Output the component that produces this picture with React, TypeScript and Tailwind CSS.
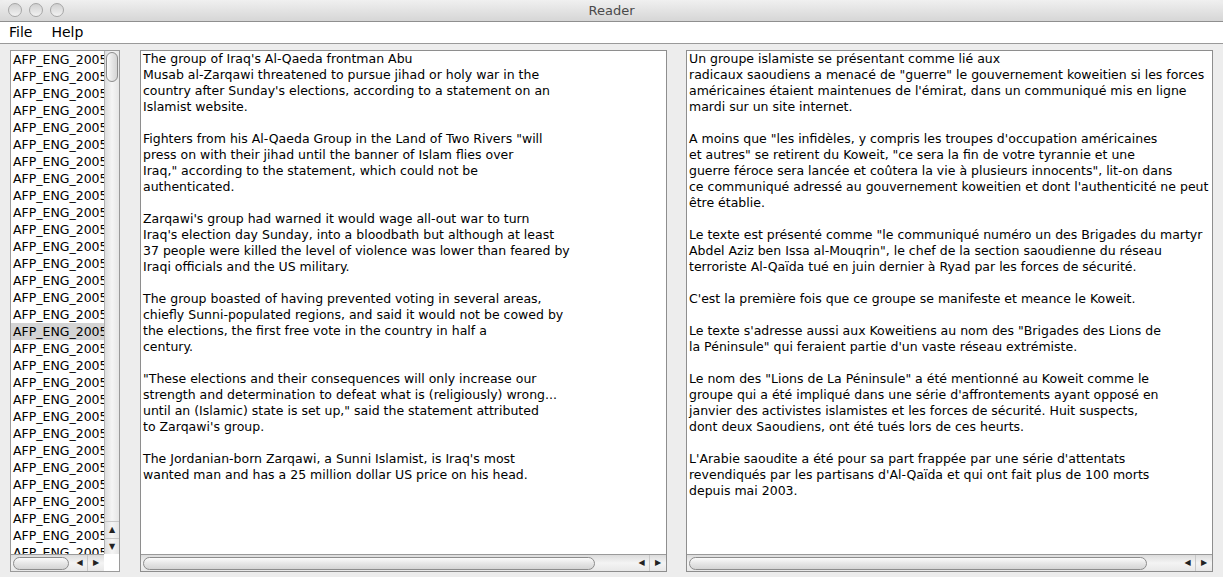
import React from "react";

const FONT = { fontFamily: '"Lucida Grande", "DejaVu Sans", sans-serif' };

const english = [
  "The group of Iraq's Al-Qaeda frontman Abu",
  "Musab al-Zarqawi threatened to pursue jihad or holy war in the",
  "country after Sunday's elections, according to a statement on an",
  "Islamist website.",
  "",
  'Fighters from his Al-Qaeda Group in the Land of Two Rivers "will',
  "press on with their jihad until the banner of Islam flies over",
  'Iraq," according to the statement, which could not be',
  "authenticated.",
  "",
  "Zarqawi's group had warned it would wage all-out war to turn",
  "Iraq's election day Sunday, into a bloodbath but although at least",
  "37 people were killed the level of violence was lower than feared by",
  "Iraqi officials and the US military.",
  "",
  "The group boasted of having prevented voting in several areas,",
  "chiefly Sunni-populated regions, and said it would not be cowed by",
  "the elections, the first free vote in the country in half a",
  "century.",
  "",
  '"These elections and their consequences will only increase our',
  "strength and determination to defeat what is (religiously) wrong...",
  'until an (Islamic) state is set up," said the statement attributed',
  "to Zarqawi's group.",
  "",
  "The Jordanian-born Zarqawi, a Sunni Islamist, is Iraq's most",
  "wanted man and has a 25 million dollar US price on his head.",
];

const french = [
  "Un groupe islamiste se présentant comme lié aux",
  'radicaux saoudiens a menacé de "guerre" le gouvernement koweitien si les forces',
  "américaines étaient maintenues de l'émirat, dans un communiqué mis en ligne",
  "mardi sur un site internet.",
  "",
  'A moins que "les infidèles, y compris les troupes d\'occupation américaines',
  'et autres" se retirent du Koweit, "ce sera la fin de votre tyrannie et une',
  'guerre féroce sera lancée et coûtera la vie à plusieurs innocents", lit-on dans',
  "ce communiqué adressé au gouvernement koweitien et dont l'authenticité ne peut",
  "être établie.",
  "",
  'Le texte est présenté comme "le communiqué numéro un des Brigades du martyr',
  'Abdel Aziz ben Issa al-Mouqrin", le chef de la section saoudienne du réseau',
  "terroriste Al-Qaïda tué en juin dernier à Ryad par les forces de sécurité.",
  "",
  "C'est la première fois que ce groupe se manifeste et meance le Koweit.",
  "",
  'Le texte s\'adresse aussi aux Koweitiens au nom des "Brigades des Lions de',
  'la Péninsule" qui feraient partie d\'un vaste réseau extrémiste.',
  "",
  'Le nom des "Lions de La Péninsule" a été mentionné au Koweit comme le',
  "groupe qui a été impliqué dans une série d'affrontements ayant opposé en",
  "janvier des activistes islamistes et les forces de sécurité. Huit suspects,",
  "dont deux Saoudiens, ont été tués lors de ces heurts.",
  "",
  "L'Arabie saoudite a été pour sa part frappée par une série d'attentats",
  "revendiqués par les partisans d'Al-Qaïda et qui ont fait plus de 100 morts",
  "depuis mai 2003.",
];

function Arrows() {
  return (
    <div className="flex h-full shrink-0">
      <div className="flex w-[16px] items-center justify-center border-r border-[#c8c8c8] text-[8px] leading-none text-[#222]">
        ◀
      </div>
      <div className="flex w-[16px] items-center justify-center text-[8px] leading-none text-[#222]">
        ▶
      </div>
    </div>
  );
}

function HScroll({ thumb }: { thumb: number }) {
  return (
    <div className="flex h-[17px] shrink-0 border-t border-[#9a9a9a] bg-gradient-to-b from-[#dcdcdc] via-[#f4f4f4] to-[#e8e8e8]">
      <div className="flex min-w-0 flex-1 items-center px-[2px]">
        <div
          className="h-[13px] rounded-full border border-[#8c8c8c] bg-gradient-to-b from-[#fbfbfb] via-[#e6e6e6] to-[#d4d4d4]"
          style={{ width: thumb }}
        />
      </div>
      <Arrows />
    </div>
  );
}

function TextPane({ lines, thumb }: { lines: string[]; thumb: number }) {
  return (
    <div className="flex h-full w-[527px] flex-col border border-[#8e8e8e] bg-white">
      <div className="flex-1 overflow-hidden px-[2px] text-[12.5px] leading-[16px] text-black">
        {lines.map((l, i) => (
          <div key={i} className="h-[16px] whitespace-pre">
            {l}
          </div>
        ))}
      </div>
      <HScroll thumb={thumb} />
    </div>
  );
}

function ListPane() {
  const rows = Array.from({ length: 30 }, (_, i) => i);
  return (
    <div className="flex h-full w-[110px] flex-col border border-[#9a9a9a] bg-white">
      <div className="flex min-h-0 flex-1">
        <div className="min-w-0 flex-1 overflow-hidden">
          {rows.map((i) => (
            <div
              key={i}
              className={
                "h-[17px] whitespace-pre pl-[2px] text-[12.5px] leading-[17px] text-black " +
                (i === 16 ? "bg-[#d4d4d4]" : "")
              }
            >
              AFP_ENG_2005
            </div>
          ))}
        </div>
        <div className="flex w-[15px] shrink-0 flex-col border-l border-[#b0b0b0] bg-gradient-to-r from-[#dedede] via-[#f5f5f5] to-[#e6e6e6]">
          <div className="flex-1 px-[1px] pt-[1px]">
            <div className="h-[30px] rounded-full border border-[#8c8c8c] bg-gradient-to-r from-[#fbfbfb] via-[#e6e6e6] to-[#d4d4d4]" />
          </div>
          <div className="flex h-[17px] items-center justify-center border-t border-[#c8c8c8] text-[8px] leading-none text-[#222]">
            ▲
          </div>
          <div className="flex h-[16px] items-center justify-center border-t border-[#c8c8c8] text-[8px] leading-none text-[#222]">
            ▼
          </div>
        </div>
      </div>
      <div className="flex h-[17px] shrink-0">
        <div className="flex min-w-0 flex-1 border-t border-[#9a9a9a] bg-gradient-to-b from-[#dcdcdc] via-[#f4f4f4] to-[#e8e8e8]">
          <div className="flex flex-1 items-center px-[2px]">
            <div className="h-[13px] w-[56px] rounded-full border border-[#8c8c8c] bg-gradient-to-b from-[#fbfbfb] via-[#e6e6e6] to-[#d4d4d4]" />
          </div>
          <Arrows />
        </div>
        <div className="w-[15px] bg-white" />
      </div>
    </div>
  );
}

export default function App() {
  return (
    <div
      className="flex h-[577px] w-[1223px] flex-col overflow-hidden bg-[#ededed]"
      style={FONT}
    >
      <div className="relative flex h-[22px] shrink-0 items-center justify-center rounded-t-[5px] border-b border-[#8f8f8f] bg-gradient-to-b from-[#f0f0f0] to-[#d6d6d6]">
        <div className="absolute left-[8px] top-[3px] flex gap-[7px]">
          {[0, 1, 2].map((i) => (
            <div
              key={i}
              className="h-[14px] w-[14px] rounded-full border border-[#a6a6a6] bg-gradient-to-b from-[#d0d0d0] to-[#f2f2f2]"
            />
          ))}
        </div>
        <span className="text-[13px] text-[#4a4a4a]">Reader</span>
      </div>
      <div className="flex h-[22px] shrink-0 items-center gap-[19px] border-b border-[#9a9a9a] bg-white pl-[9px] text-[14px] text-black">
        <span>File</span>
        <span>Help</span>
      </div>
      <div className="flex min-h-0 flex-1 pb-[5px] pl-[10px] pt-[6px]">
        <ListPane />
        <div className="w-[20px]" />
        <TextPane lines={english} thumb={452} />
        <div className="w-[19px]" />
        <TextPane lines={french} thumb={458} />
      </div>
    </div>
  );
}
